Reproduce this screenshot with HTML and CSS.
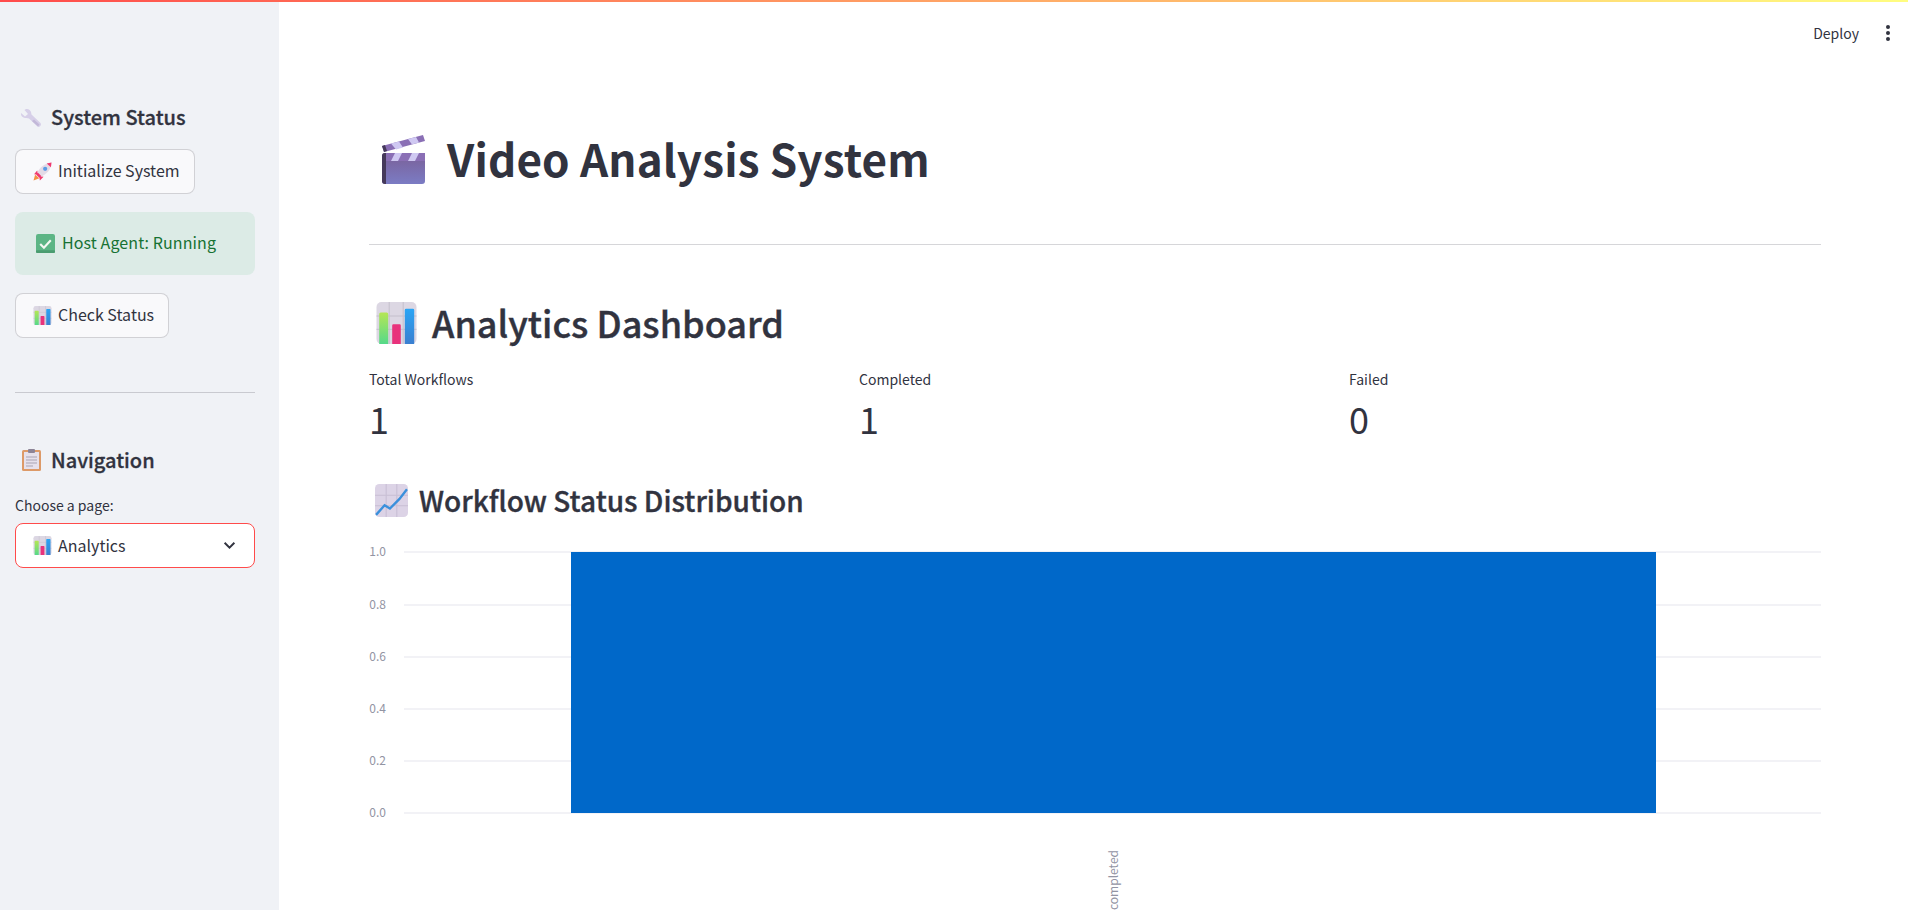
FILE: index.html
```html
<!DOCTYPE html>
<html lang="en">
<head>
	<meta charset="utf-8">
	<title>Video Analysis System</title>
	<link rel="stylesheet" href="styles.css">
</head>
<body>
<!-- shared icons -->
<svg class="defs" width="0" height="0">
	<defs>
		<linearGradient id="barGreen" x1="0" y1="0" x2="0" y2="1"><stop offset="0" stop-color="#b5e655"/><stop offset="1" stop-color="#55d98a"/></linearGradient>
		<linearGradient id="barBlue" x1="0" y1="0" x2="0" y2="1"><stop offset="0" stop-color="#2aa5f5"/><stop offset="1" stop-color="#3a7fd0"/></linearGradient>
		<linearGradient id="clapBody" x1="0" y1="0" x2="0" y2="1"><stop offset="0" stop-color="#7a5f97"/><stop offset="1" stop-color="#7b7cc4"/></linearGradient>
		<symbol id="barChart" viewBox="0 0 40 42">
			<rect width="40" height="42" rx="5" fill="#dcd7e3"/>
			<path d="M12.700 0v42M26.700 0v42M0 14h40M0 27.300h40" stroke="#c4bfcc" stroke-width="1"/>
			<path d="M2.700 12a1.500 1.500 0 0 1 1.500-1.500h6a1.500 1.500 0 0 1 1.500 1.500v30H2.700z" fill="url(#barGreen)"/>
			<path d="M15.700 23.500a1.200 1.200 0 0 1 1.200-1.200h6.200a1.200 1.200 0 0 1 1.200 1.200V42h-8.600z" fill="#e8327c"/>
			<path d="M28.300 8a1.300 1.300 0 0 1 1.300-1.300h6.800a1.300 1.300 0 0 1 1.300 1.300v34h-9.400z" fill="url(#barBlue)"/>
		</symbol>
	</defs>
</svg>

<aside class="sidebar">
	<h4 class="side-title first">
		<svg class="ico-wrench" viewBox="0 0 22 21"><path d="M1 5l4 3.500L8 6 4.500 2 6 1c2.500-.5 4.500 1 5 3l.5 2.500 9 8.500c1.500 2-1 5-3 3.500L9 10.500 6.500 10C3 10 .5 8 1 5z" fill="#d6cfe8"/><path d="M14 11.500l5.500 5-1.500 2-6-5.500z" fill="#c2b8d8"/></svg>
		System Status
	</h4>
	<button class="btn">
		<svg class="ico-sm" viewBox="0 0 18 18"><path d="M.5 17.500L2 12l4 3.500z" fill="#f59042"/><path d="M4 8l-3 3.500 4 .5zM10 14l-3.500 3.500-.5-4z" fill="#f03a6e"/><path d="M4 10.500C6 5.500 11 1 17.500.5c0 6.500-5 11.500-10 13.500z" fill="#e4dbe6"/><path d="M13 1.500L17.500.5 17 5zM4.500 10l3.500 3.500-2 1.500-3-3z" fill="#f0386f"/><circle cx="11.500" cy="6.500" r="2" fill="#5b9ce6"/></svg>
		Initialize System
	</button>
	<div class="alert">
		<svg class="ico-sm" viewBox="0 0 18 18"><rect width="18" height="18" rx="2" fill="#5cb585"/><rect y="15.500" width="18" height="2.500" rx="1" fill="#4a9c70"/><path d="M4 9.500l3.500 3.500L14 6" fill="none" stroke="#f4f8f2" stroke-width="2"/></svg>
		Host Agent: Running
	</div>
	<button class="btn btn-after-alert">
		<svg class="ico-sm"><use href="#barChart"/></svg>
		Check Status
	</button>
	<hr class="side-rule">
	<h4 class="side-title">
		<svg class="ico-clip" viewBox="0 0 19 22"><rect y="1" width="19" height="21" rx="1.500" fill="#dd9a68"/><rect x="2" y="3" width="15" height="17" fill="#e6e1ec"/><rect x="6" y="0" width="7" height="4" rx="1" fill="#8d8496"/><path d="M4 8h11M4 11h11M4 14h11M4 17h7" stroke="#a9a3b2"/></svg>
		Navigation
	</h4>
	<label class="field-label" for="pageSelect">Choose a page:</label>
	<div class="select" id="pageSelect">
		<svg class="ico-sm"><use href="#barChart"/></svg>
		<span class="select-value">Analytics</span>
		<svg class="chevron" viewBox="0 0 12 8"><path d="M1.500 1.500L6 6l4.500-4.500" fill="none" stroke="#31333f" stroke-width="1.800"/></svg>
	</div>
</aside>

<main class="main">
	<header class="topbar">
		<span class="deploy">Deploy</span>
		<svg class="dots" viewBox="0 0 4 16"><circle cx="2" cy="2" r="2"/><circle cx="2" cy="8" r="2"/><circle cx="2" cy="14" r="2"/></svg>
	</header>

	<div class="content">
		<h1 class="title">
			<svg class="ico-clapper" viewBox="0 0 43 49">
				<rect y="18" width="43" height="31" rx="3" fill="url(#clapBody)"/>
				<path d="M0 21a3 3 0 0 1 3-3h1v31H3a3 3 0 0 1-3-3z" fill="#45395a"/>
				<rect x="4" y="18" width="39" height="8" fill="#8a6fb5"/>
				<path d="M9 26l4-8h7l-4 8zM26 26l4-8h7l-4 8z" fill="#cfc8f2"/>
				<path d="M0 11L41 0l2 6L2 17z" fill="#8a6fb5"/>
				<path d="M9 8.500L17 6.500l4 6-7 2zM26 4l8-2 3 5.500-7 2z" fill="#cfc8f2"/>
				<path d="M0 11l3-1 2 6-3 1z" fill="#45395a"/>
			</svg>
			Video Analysis System
		</h1>
		<hr class="rule">

		<h2 class="section">
			<svg class="ico-lg"><use href="#barChart"/></svg>
			Analytics Dashboard
		</h2>

		<div class="metrics">
			<div class="metric"><div class="metric-label">Total Workflows</div><div class="metric-value">1</div></div>
			<div class="metric"><div class="metric-label">Completed</div><div class="metric-value">1</div></div>
			<div class="metric"><div class="metric-label">Failed</div><div class="metric-value">0</div></div>
		</div>

		<h3 class="subsection">
			<svg class="ico-md" viewBox="0 0 31 31"><rect width="31" height="31" rx="4" fill="#dcd3e6"/><path d="M10.500 0v31M20.500 0v31M0 10.500h31M0 20.500h31" stroke="#c8bfd4"/><path d="M1 29l8-9 5 3 9-9 7-9" fill="none" stroke="#3a90dc" stroke-width="2.200"/></svg>
			Workflow Status Distribution
		</h3>

		<svg class="chart" viewBox="0 0 1452 380" width="1452" height="380">
			<g class="grid">
				<line x1="35" x2="1452" y1="10" y2="10"/>
				<line x1="35" x2="1452" y1="63" y2="63"/>
				<line x1="35" x2="1452" y1="115" y2="115"/>
				<line x1="35" x2="1452" y1="167" y2="167"/>
				<line x1="35" x2="1452" y1="219" y2="219"/>
				<line x1="35" x2="1452" y1="271" y2="271"/>
			</g>
			<g class="ticks">
				<text x="17" y="14">1.0</text>
				<text x="17" y="67">0.8</text>
				<text x="17" y="119">0.6</text>
				<text x="17" y="171">0.4</text>
				<text x="17" y="223">0.2</text>
				<text x="17" y="275">0.0</text>
			</g>
			<rect class="bar" x="202" y="10" width="1085" height="261"/>
			<text class="x-label" transform="translate(749 308) rotate(-90)">completed</text>
		</svg>
	</div>
</main>
</body>
</html>
```

FILE: styles.css
```css
* {
	box-sizing: border-box;
}

html, body {
	height: 100%;
}

body {
	margin: 0;
	height: 910px;
	display: flex;
	overflow: hidden;
	position: relative;
	background: #fff;
	color: #31333f;
	font-family: "Noto Sans CJK SC", "Noto Sans", sans-serif;
	font-size: 16px;
}

/* rainbow line on top of the app */
body::before {
	content: "";
	position: absolute;
	top: 0;
	left: 0;
	right: 0;
	height: 2px;
	background: linear-gradient(90deg, #ff4b4b, #fffd80);
}

.defs {
	position: absolute;
}

/* sidebar */
.sidebar {
	width: 279px;
	flex: none;
	padding: 104px 24px 0 15px;
	background: #f0f2f6;
}

.side-title {
	margin: 0;
	display: flex;
	align-items: center;
	gap: 9px;
	height: 26px;
	font-size: 20px;
	font-weight: 500;
	line-height: 26px;
	-webkit-text-stroke: 0.3px #31333f;
}

.ico-wrench {
	width: 22px;
	height: 21px;
	margin-left: 5px;
	margin-top: 2px;
}

.ico-clip {
	width: 19px;
	height: 22px;
	margin: 0 1px 0 7px;
}

.ico-sm {
	width: 19px;
	height: 19px;
	flex: none;
}

.btn {
	display: flex;
	align-items: center;
	gap: 6px;
	height: 45px;
	margin-top: 19px;
	padding: 0 14px 4px 17px;
	background: #f9f9fb;
	border: 1px solid rgba(49, 51, 63, 0.2);
	border-radius: 8px;
	color: inherit;
	font: inherit;
}

.btn-after-alert {
	margin-top: 18px;
}

.alert {
	display: flex;
	align-items: center;
	gap: 7px;
	height: 63px;
	margin-top: 18px;
	padding: 0 0 3px 21px;
	background: #dcebe6;
	border-radius: 8px;
	color: #177233;
	letter-spacing: 0.1px;
}

.btn .ico-sm {
	margin-top: 4px;
}

.alert .ico-sm {
	margin-top: 3px;
}

.side-rule {
	margin: 54px 0 54px;
	border: 0;
	border-top: 1px solid #c9cad0;
}

.field-label {
	display: block;
	margin-top: 22px;
	font-size: 14px;
	line-height: 20px;
}

.select {
	display: flex;
	align-items: center;
	gap: 6px;
	height: 45px;
	margin-top: 8px;
	padding: 0 18px 2px 17px;
	background: #fff;
	border: 1px solid #ff4b4b;
	border-radius: 8px;
}

.select .ico-sm,
.chevron {
	margin-top: 2px;
}

.select-value {
	flex: 1;
}

.chevron {
	width: 13px;
	height: 9px;
}

/* main area */
.main {
	flex: 1;
	min-width: 0;
}

.topbar {
	display: flex;
	justify-content: flex-end;
	align-items: center;
	height: 66px;
	padding-right: 18px;
	gap: 27px;
	font-size: 14px;
}

.dots {
	width: 4px;
	height: 16px;
	fill: #31333f;
}

.content {
	padding: 0 87px 0 90px;
}

.title {
	margin: 68px 0 0;
	display: flex;
	align-items: center;
	gap: 22px;
	height: 49px;
	padding-left: 13px;
	font-size: 44px;
	font-weight: 700;
	letter-spacing: 0.15px;
	line-height: 49px;
}

.ico-clapper {
	width: 43px;
	height: 49px;
	margin-top: 2px;
}

.rule {
	margin: 61px 0 0;
	border: 0;
	border-top: 1px solid #d6d6d9;
}

.section {
	margin: 56px 0 0;
	display: flex;
	align-items: center;
	gap: 15px;
	height: 42px;
	padding-left: 7px;
	font-size: 36px;
	font-weight: 500;
	line-height: 42px;
	-webkit-text-stroke: 0.4px #31333f;
}

.ico-lg {
	width: 41px;
	height: 42px;
	margin-top: 2px;
}

.metrics {
	display: grid;
	grid-template-columns: repeat(3, 490px);
	margin-top: 26px;
}

.metric-label {
	font-size: 14px;
	line-height: 20px;
}

.metric-value {
	font-size: 36px;
	line-height: 50px;
	margin-top: 4px;
}

.subsection {
	margin: 41px 0 0;
	display: flex;
	align-items: center;
	gap: 11px;
	height: 32px;
	padding-left: 6px;
	font-size: 28px;
	font-weight: 500;
	line-height: 32px;
	-webkit-text-stroke: 0.35px #31333f;
}

.ico-md {
	width: 33px;
	height: 33px;
}

.chart {
	display: block;
	margin-top: 26px;
}

.grid line {
	stroke: #f2f2f6;
	stroke-width: 2;
}

.ticks text {
	fill: #9294a3;
	font-size: 12px;
	text-anchor: end;
}

.bar {
	fill: #0068c9;
}

.x-label {
	fill: #9294a3;
	font-size: 12px;
	text-anchor: end;
}
```
